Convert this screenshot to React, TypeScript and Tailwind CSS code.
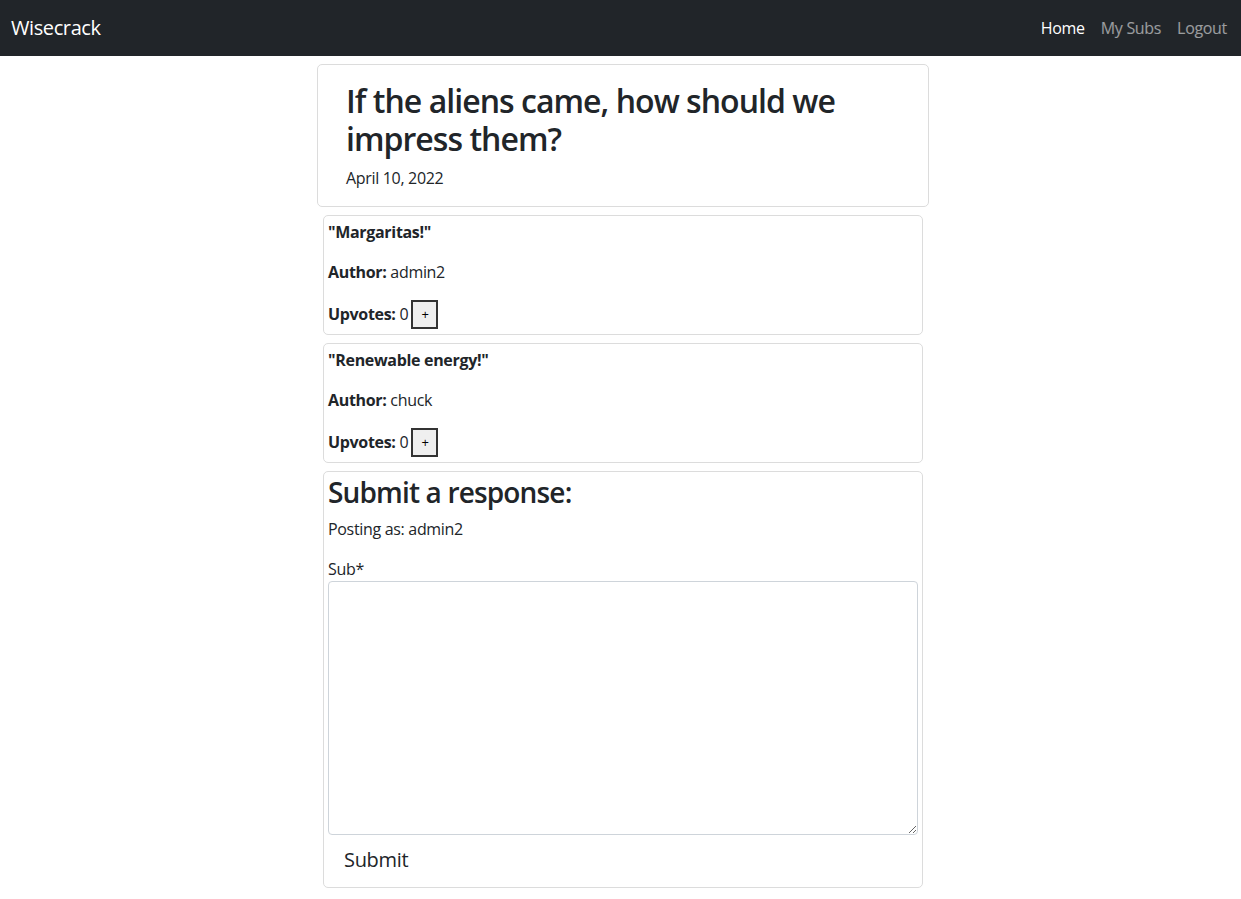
import { useState } from "react";

type Sub = {
  id: number;
  text: string;
  author: string;
  upvotes: number;
};

const initialSubs: Sub[] = [
  { id: 1, text: "Margaritas!", author: "admin2", upvotes: 0 },
  { id: 2, text: "Renewable energy!", author: "chuck", upvotes: 0 },
];

function Navbar() {
  return (
    <nav className="flex h-14 items-center justify-between bg-[#212529] pl-[11px] pr-[6px]">
      <a href="#" className="text-[20px] leading-[30px] tracking-[-0.02em] text-white">
        Wisecrack
      </a>
      <div className="flex items-center text-[16px] leading-6">
        <a href="#" className="px-2 text-white">
          Home
        </a>
        <a href="#" className="px-2 text-white/55">
          My Subs
        </a>
        <a href="#" className="px-2 text-white/55">
          Logout
        </a>
      </div>
    </nav>
  );
}

function SubCard({ sub, onUpvote }: { sub: Sub; onUpvote: () => void }) {
  return (
    <div className="rounded-[5px] border border-[#dcdcdc] px-1 pt-1 pb-[5px]">
      <p className="mb-4 font-bold">"{sub.text}"</p>
      <p className="mb-4">
        <b>Author:</b> {sub.author}
      </p>
      <div className="flex items-center">
        <b>Upvotes:</b>
        <span className="ml-1">{sub.upvotes}</span>
        <button
          type="button"
          onClick={onUpvote}
          className="ml-[3px] flex h-[29px] w-[27px] items-center justify-center border-2 border-[#333] bg-[#efefef] text-[13px] leading-none text-black"
        >
          +
        </button>
      </div>
    </div>
  );
}

export default function App() {
  const [subs, setSubs] = useState<Sub[]>(initialSubs);
  const [draft, setDraft] = useState("");

  const upvote = (id: number) => {
    setSubs((prev) =>
      prev.map((s) => (s.id === id ? { ...s, upvotes: s.upvotes + 1 } : s)),
    );
  };

  return (
    <div
      className="min-h-[899px] bg-white text-[16px] leading-6 tracking-[-0.02em] text-[#212529]"
      style={{ fontFamily: '"Segoe UI", "Open Sans", "Noto Sans", sans-serif' }}
    >
      <Navbar />
      <main className="ml-[317px] mt-[8px] flex w-[612px] flex-col gap-2">
        <div className="rounded-[5px] border border-[#dcdcdc] px-[28px] pt-[17px] pb-[16px]">
          <h2 className="mb-[7px] text-[32px] leading-[1.2] font-semibold tracking-[-0.03em]">
            If the aliens came, how should we impress them?
          </h2>
          <p>April 10, 2022</p>
        </div>

        <div className="flex flex-col gap-2 px-[6px]">
          {subs.map((sub) => (
            <SubCard key={sub.id} sub={sub} onUpvote={() => upvote(sub.id)} />
          ))}

          <div className="rounded-[5px] border border-[#dcdcdc] px-1 pt-1 pb-1">
            <h3 className="mb-2 text-[28px] leading-[1.2] font-semibold tracking-[-0.03em]">
              Submit a response:
            </h3>
            <p className="mb-4">Posting as: admin2</p>
            <label className="block" htmlFor="sub">
              Sub*
            </label>
            <textarea
              id="sub"
              value={draft}
              onChange={(e) => setDraft(e.target.value)}
              className="block h-[254px] w-full rounded-[4px] border border-[#ced4da] px-3 py-1.5"
            />
            <button
              type="button"
              className="mt-0.5 px-4 py-2 text-[20px] leading-[30px] text-[#212529]"
            >
              Submit
            </button>
          </div>
        </div>
      </main>
    </div>
  );
}
